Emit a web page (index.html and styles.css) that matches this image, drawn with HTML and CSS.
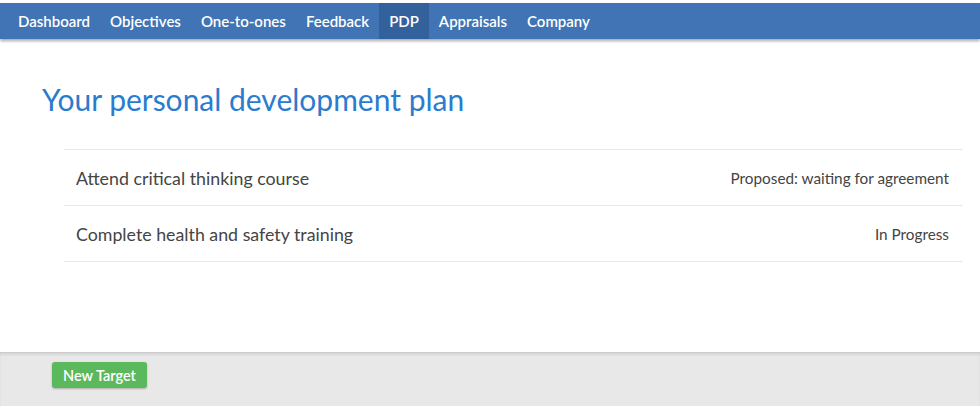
FILE: index.html
```html
<!DOCTYPE html>
<html lang="en">
<head>
  <meta charset="UTF-8" />
  <title>PDP</title>
  <link rel="stylesheet" href="styles.css">
</head>
<body>

  <nav class="topnav">
    <a href="#">Dashboard</a>
    <a href="#">Objectives</a>
    <a href="#">One-to-ones</a>
    <a href="#">Feedback</a>
    <a href="#" class="active">PDP</a>
    <a href="#">Appraisals</a>
    <a href="#">Company</a>
  </nav>

  <div class="content">
    <h1>Your personal development plan</h1>

    <ul class="targets">
      <li>
        <span class="title">Attend critical thinking course</span>
        <span class="state">Proposed: waiting for agreement</span>
      </li>
      <li>
        <span class="title">Complete health and safety training</span>
        <span class="state">In Progress</span>
      </li>
    </ul>
  </div>

  <div class="footer">
    <button>New Target</button>
  </div>

</body>
</html>
```

FILE: styles.css
```css
html, body {
  height: 100%;
}
body {
  margin: 0;
  font-family: Lato, "Open Sans", sans-serif;
  background: #fff;
  display: flex;
  flex-direction: column;
  overflow: hidden;
}
.topnav {
  margin-top: 3px;
  display: flex;
  height: 36px;
  background: #4074b4;
  box-shadow: 0 2px 3px rgba(0,0,0,0.35);
  padding-left: 8px;
}
.topnav a {
  display: flex;
  align-items: center;
  padding: 0 10px;
  color: #fff;
  text-decoration: none;
  font-size: 15px;
  font-weight: 600;
}
.topnav a.active {
  background: #33619c;
}
.content {
  flex: 1;
  padding: 0 17px 0 42px;
}
h1 {
  margin: 41px 0 31px;
  font-size: 30px;
  font-weight: 400;
  color: #2b7bcf;
  line-height: 38px;
}
.targets {
  list-style: none;
  margin: 0 0 0 22px;
  padding: 0;
  border-top: 1px solid #e8e8e8;
}
.targets li {
  display: flex;
  justify-content: space-between;
  align-items: center;
  height: 55px;
  padding: 0 14px 0 12px;
  border-bottom: 1px solid #e8e8e8;
}
.title {
  font-size: 17.8px;
  color: #444;
}
.state {
  font-size: 15.3px;
  color: #444;
}
.footer {
  height: 54px;
  background: #e8e8e8;
  border-top: 1px solid #ccc;
  box-shadow: inset 0 2px 2px rgba(0,0,0,0.08);
  padding: 9px 0 0 52px;
  box-sizing: border-box;
}
.footer button {
  background: #5cb85c;
  color: #fff;
  border: none;
  border-radius: 3px;
  font-family: inherit;
  font-size: 14.5px;
  font-weight: 600;
  height: 26px;
  padding: 0 11px;
  box-shadow: 0 1px 2px rgba(0,0,0,0.25);
}
```
